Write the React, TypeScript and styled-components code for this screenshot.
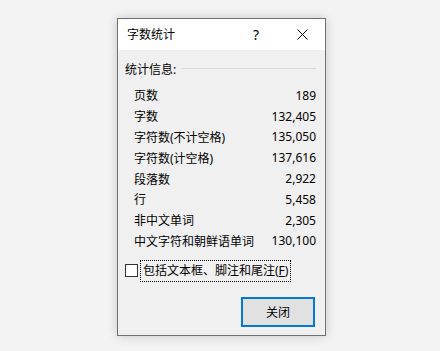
import styled, { createGlobalStyle } from "styled-components";

const FONT = `"Noto Sans", "Noto Sans CJK SC", sans-serif`;

const GlobalStyle = createGlobalStyle`
  html, body {
    margin: 0;
    padding: 0;
    background: #f3f3f3;
  }
  body {
    font-family: ${FONT};
    font-size: 12px;
    color: #000;
  }
`;

const stats = [
  { label: "页数", value: "189" },
  { label: "字数", value: "132,405" },
  { label: "字符数(不计空格)", value: "135,050" },
  { label: "字符数(计空格)", value: "137,616" },
  { label: "段落数", value: "2,922" },
  { label: "行", value: "5,458" },
  { label: "非中文单词", value: "2,305" },
  { label: "中文字符和朝鲜语单词", value: "130,100" },
];

const Page = styled.div`
  width: 440px;
  height: 351px;
  padding: 18px 0 0 117px;
  box-sizing: border-box;
`;

const Dialog = styled.div`
  width: 209px;
  height: 318px;
  box-sizing: border-box;
  border: 1px solid #707070;
  background: #f0f0f0;
  display: flex;
  flex-direction: column;
  box-shadow: 0 0 10px rgba(0, 0, 0, 0.18);
`;

const TitleBar = styled.div`
  height: 31px;
  background: #fff;
  display: flex;
  align-items: center;
  padding-left: 9px;
`;

const Title = styled.div`
  flex: 1;
  line-height: 16px;
  margin-top: 1px;
`;

const TitleButton = styled.div<{ width: number }>`
  width: ${({ width }) => width}px;
  height: 31px;
  display: flex;
  align-items: center;
  justify-content: center;
  font-size: 14px;
`;

const Body = styled.div`
  flex: 1;
  display: flex;
  flex-direction: column;
  padding: 12px 9px 8px 7px;
`;

const GroupHeader = styled.div`
  display: flex;
  align-items: center;
  line-height: 16px;
  gap: 5px;
`;

const GroupLine = styled.div`
  flex: 1;
  height: 1px;
  background: #dadada;
  margin-bottom: 3px;
`;

const Rows = styled.div`
  margin-top: 7px;
  padding-left: 9px;
  display: flex;
  flex-direction: column;
`;

const Row = styled.div`
  display: flex;
  justify-content: space-between;
  align-items: center;
  height: 20.8px;
`;

const CheckRow = styled.label`
  display: flex;
  align-items: center;
  margin-top: 10px;
  gap: 2px;
`;

const Box = styled.span`
  width: 11px;
  height: 11px;
  border: 1px solid #333;
  background: #fff;
  margin-top: -1px;
`;

const CheckText = styled.span`
  height: 18px;
  line-height: 18px;
  padding: 0 1px;
  outline: 1px dotted #000;
  outline-offset: 0;
  border: 1px solid transparent;
  margin-left: 1px;
`;

const Footer = styled.div`
  flex: 1;
  display: flex;
  justify-content: flex-end;
  align-items: flex-end;
`;

const Button = styled.button`
  width: 74px;
  height: 30px;
  border: 2px solid #0078d7;
  background: #e1e1e1;
  font-family: ${FONT};
  font-size: 12px;
  color: #000;
  padding: 0;
  margin-right: 1px;
`;

const CloseIcon = () => (
  <svg width="11" height="11" viewBox="0 0 11 11">
    <path d="M0.5 0.5 L10.5 10.5 M10.5 0.5 L0.5 10.5" stroke="#000" strokeWidth="1" fill="none" />
  </svg>
);

export default function App() {
  return (
    <>
      <GlobalStyle />
      <Page>
        <Dialog>
          <TitleBar>
            <Title>字数统计</Title>
            <TitleButton width={46}>?</TitleButton>
            <TitleButton width={46}>
              <CloseIcon />
            </TitleButton>
          </TitleBar>
          <Body>
            <GroupHeader>
              <span>统计信息:</span>
              <GroupLine />
            </GroupHeader>
            <Rows>
              {stats.map((s) => (
                <Row key={s.label}>
                  <span>{s.label}</span>
                  <span>{s.value}</span>
                </Row>
              ))}
            </Rows>
            <CheckRow>
              <Box />
              <CheckText>
                包括文本框、脚注和尾注(<u>F</u>)
              </CheckText>
            </CheckRow>
            <Footer>
              <Button>关闭</Button>
            </Footer>
          </Body>
        </Dialog>
      </Page>
    </>
  );
}
